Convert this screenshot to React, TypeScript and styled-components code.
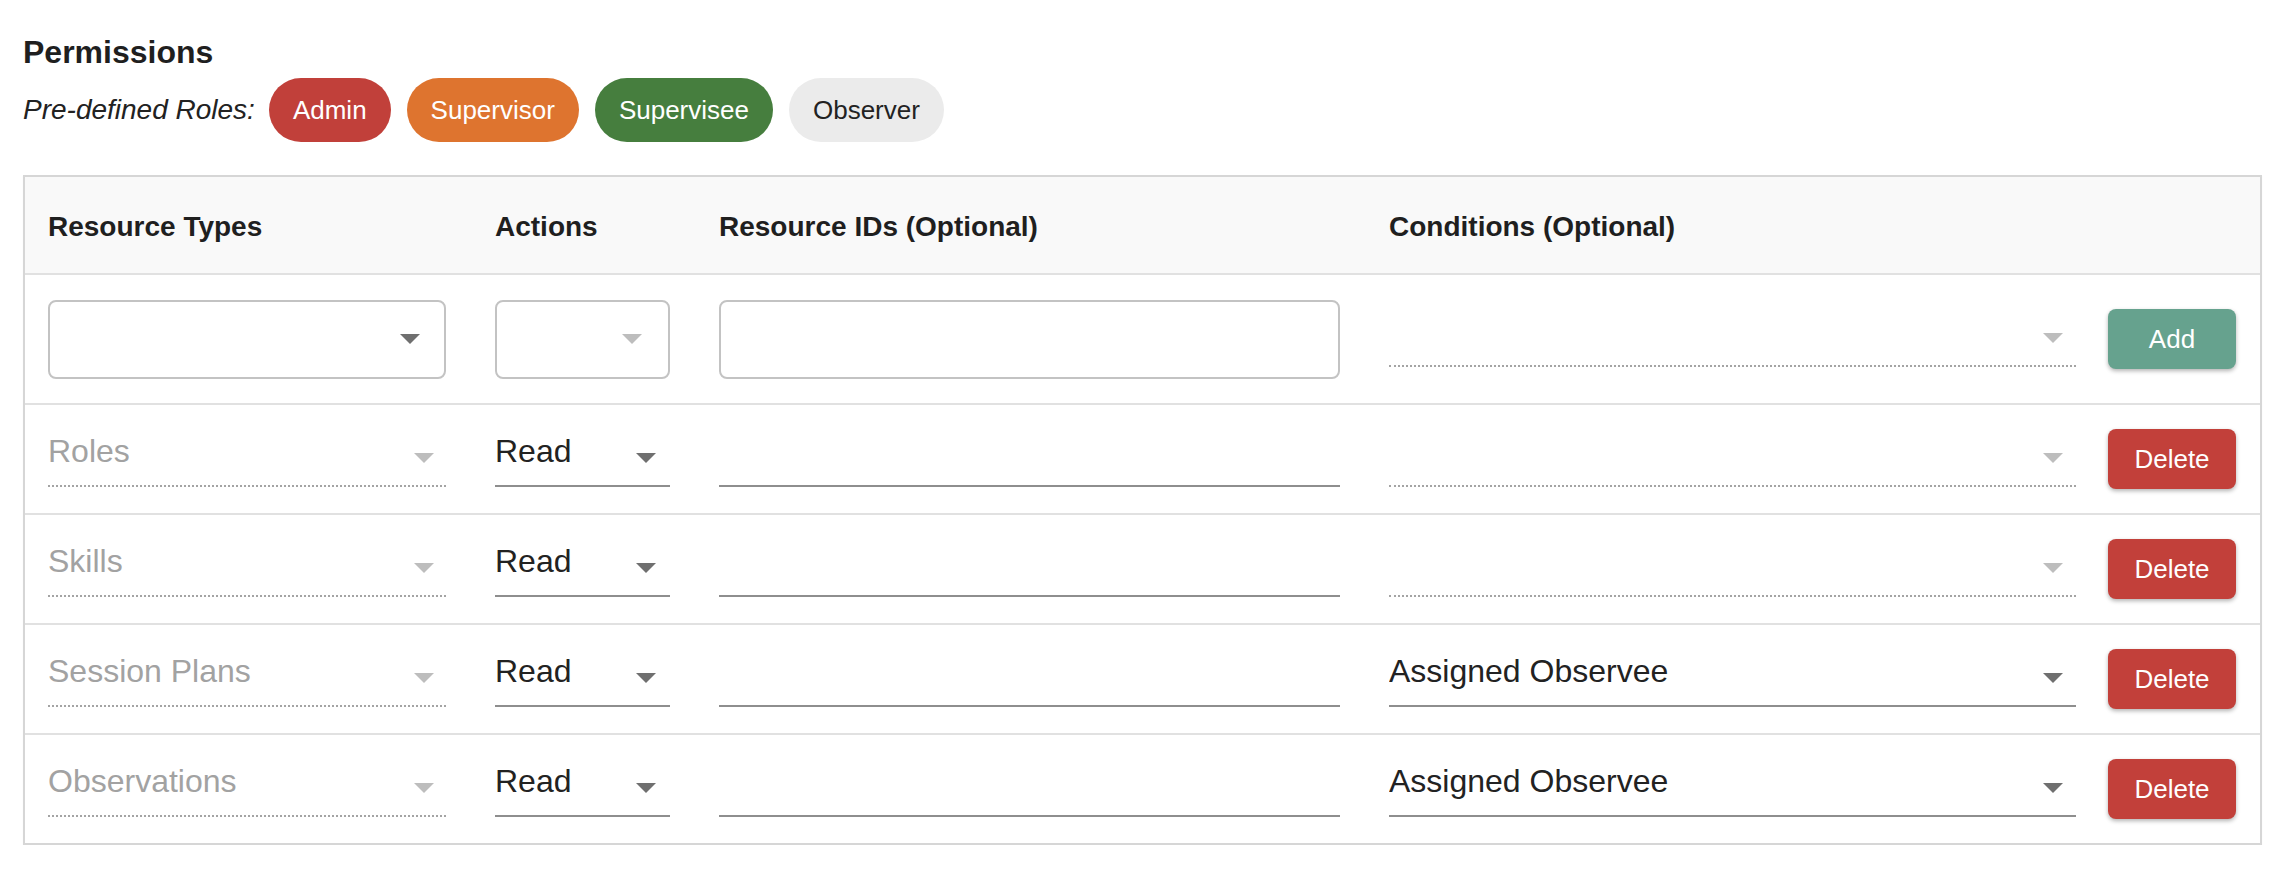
import React from "react";
import styled, { createGlobalStyle } from "styled-components";

const GlobalStyle = createGlobalStyle`
  html, body { margin: 0; padding: 0; background: #ffffff; }
  body {
    font-family: "Liberation Sans", Arial, Helvetica, sans-serif;
    color: #222222;
  }
  * { box-sizing: border-box; }
`;

const Page = styled.div`
  padding: 34px 22px 0 23px;
`;

const Title = styled.h3`
  margin: 0;
  font-size: 32px;
  line-height: 37px;
  font-weight: 700;
  color: #1f1f1f;
`;

const RolesBar = styled.div`
  display: flex;
  align-items: center;
  gap: 16px;
  height: 64px;
  margin-top: 7px;
`;

const RolesLabel = styled.span`
  font-style: italic;
  font-size: 28px;
  color: #222222;
  margin-right: -2px;
`;

const RolePill = styled.span<{ $bg: string; $fg: string }>`
  display: inline-flex;
  align-items: center;
  height: 64px;
  padding: 0 24px;
  border-radius: 32px;
  background: ${(p) => p.$bg};
  color: ${(p) => p.$fg};
  font-size: 26px;
  white-space: nowrap;
`;

const Table = styled.div`
  margin-top: 33px;
  border: 2px solid #d6d6d6;
  box-shadow: 0 1px 1px rgba(0, 0, 0, 0.06);
`;

const Row = styled.div<{ $height: number; $head?: boolean }>`
  display: grid;
  grid-template-columns: 446px 224px 670px 727px 1fr;
  align-items: center;
  height: ${(p) => p.$height}px;
  background: ${(p) => (p.$head ? "#f9f9f9" : "#ffffff")};
  padding-top: ${(p) => (p.$head ? 3 : 0)}px;

  & + & {
    border-top: 2px solid #e1e1e1;
  }

  & > * {
    padding: 0 25px 0 24px;
    min-width: 0;
  }
  & > :nth-child(1) {
    padding-left: 23px;
  }
  & > :nth-child(4) {
    padding-right: 16px;
  }
  & > :nth-child(5) {
    padding-left: 16px;
    padding-right: 24px;
  }
`;

const HeadCell = styled.div`
  font-size: 28px;
  font-weight: 700;
  color: #1f1f1f;
  white-space: nowrap;
`;

const Cell = styled.div``;

const Box = styled.div<{ $arrowGap?: number }>`
  height: 79px;
  border: 2px solid #c3c3c3;
  border-radius: 8px;
  display: flex;
  align-items: center;
  justify-content: flex-end;
  padding-right: ${(p) => p.$arrowGap ?? 0}px;
  background: #ffffff;
`;

const Field = styled.div<{ $line: "dotted" | "solid"; $arrowGap: number }>`
  display: flex;
  align-items: flex-start;
  height: 54px;
  margin-top: 2px;
  padding-bottom: 15px;
  padding-right: ${(p) => p.$arrowGap}px;
  border-bottom: 2px ${(p) => p.$line}
    ${(p) => (p.$line === "dotted" ? "#a4a4a4" : "#8e8e8e")};
`;

const FieldText = styled.span<{ $muted?: boolean }>`
  flex: 1;
  font-size: 32px;
  line-height: 37px;
  color: ${(p) => (p.$muted ? "#a2a2a2" : "#222222")};
  white-space: nowrap;
  overflow: hidden;
`;

const CaretSvg = styled.svg<{ $inField?: boolean }>`
  flex: none;
  display: block;
  margin-top: ${(p) => (p.$inField ? 20 : 0)}px;
`;

const ActionButton = styled.button<{ $variant: "add" | "delete" }>`
  display: flex;
  align-items: center;
  justify-content: center;
  width: 128px;
  height: 60px;
  border: none;
  border-radius: 8px;
  background: ${(p) => (p.$variant === "add" ? "#66a28e" : "#c2403a")};
  color: #ffffff;
  font-family: inherit;
  font-size: 26px;
  box-shadow: 0 2px 4px rgba(0, 0, 0, 0.3);
  cursor: pointer;
`;

const Caret: React.FC<{ dark?: boolean; inField?: boolean }> = ({ dark, inField }) => (
  <CaretSvg $inField={inField} width="20" height="10" viewBox="0 0 20 10">
    <polygon points="0,0 20,0 10,10" fill={dark ? "#6f6f6f" : "#bdbdbd"} />
  </CaretSvg>
);

type PermRow = {
  resource: string;
  action: string;
  condition?: string;
};

const rows: PermRow[] = [
  { resource: "Roles", action: "Read" },
  { resource: "Skills", action: "Read" },
  { resource: "Session Plans", action: "Read", condition: "Assigned Observee" },
  { resource: "Observations", action: "Read", condition: "Assigned Observee" },
];

const roles = [
  { name: "Admin", bg: "#c1403a", fg: "#ffffff" },
  { name: "Supervisor", bg: "#de742f", fg: "#ffffff" },
  { name: "Supervisee", bg: "#467e3e", fg: "#ffffff" },
  { name: "Observer", bg: "#ebebeb", fg: "#222222" },
];

export default function App() {
  return (
    <>
      <GlobalStyle />
      <Page>
        <Title>Permissions</Title>
        <RolesBar>
          <RolesLabel>Pre-defined Roles:</RolesLabel>
          {roles.map((r) => (
            <RolePill key={r.name} $bg={r.bg} $fg={r.fg}>
              {r.name}
            </RolePill>
          ))}
        </RolesBar>

        <Table>
          <Row $head $height={96}>
            <HeadCell>Resource Types</HeadCell>
            <HeadCell>Actions</HeadCell>
            <HeadCell>Resource IDs (Optional)</HeadCell>
            <HeadCell>Conditions (Optional)</HeadCell>
            <HeadCell />
          </Row>

          <Row $height={130}>
            <Cell>
              <Box $arrowGap={24}>
                <Caret dark />
              </Box>
            </Cell>
            <Cell>
              <Box $arrowGap={26}>
                <Caret />
              </Box>
            </Cell>
            <Cell>
              <Box />
            </Cell>
            <Cell>
              <Field $line="dotted" $arrowGap={13}>
                <FieldText />
                <Caret inField />
              </Field>
            </Cell>
            <Cell>
              <ActionButton $variant="add">Add</ActionButton>
            </Cell>
          </Row>

          {rows.map((r) => (
            <Row key={r.resource} $height={110}>
              <Cell>
                <Field $line="dotted" $arrowGap={12}>
                  <FieldText $muted>{r.resource}</FieldText>
                  <Caret inField />
                </Field>
              </Cell>
              <Cell>
                <Field $line="solid" $arrowGap={14}>
                  <FieldText>{r.action}</FieldText>
                  <Caret dark inField />
                </Field>
              </Cell>
              <Cell>
                <Field $line="solid" $arrowGap={0}>
                  <FieldText />
                </Field>
              </Cell>
              <Cell>
                {r.condition ? (
                  <Field $line="solid" $arrowGap={13}>
                    <FieldText>{r.condition}</FieldText>
                    <Caret dark inField />
                  </Field>
                ) : (
                  <Field $line="dotted" $arrowGap={13}>
                    <FieldText />
                    <Caret inField />
                  </Field>
                )}
              </Cell>
              <Cell>
                <ActionButton $variant="delete">Delete</ActionButton>
              </Cell>
            </Row>
          ))}
        </Table>
      </Page>
    </>
  );
}
